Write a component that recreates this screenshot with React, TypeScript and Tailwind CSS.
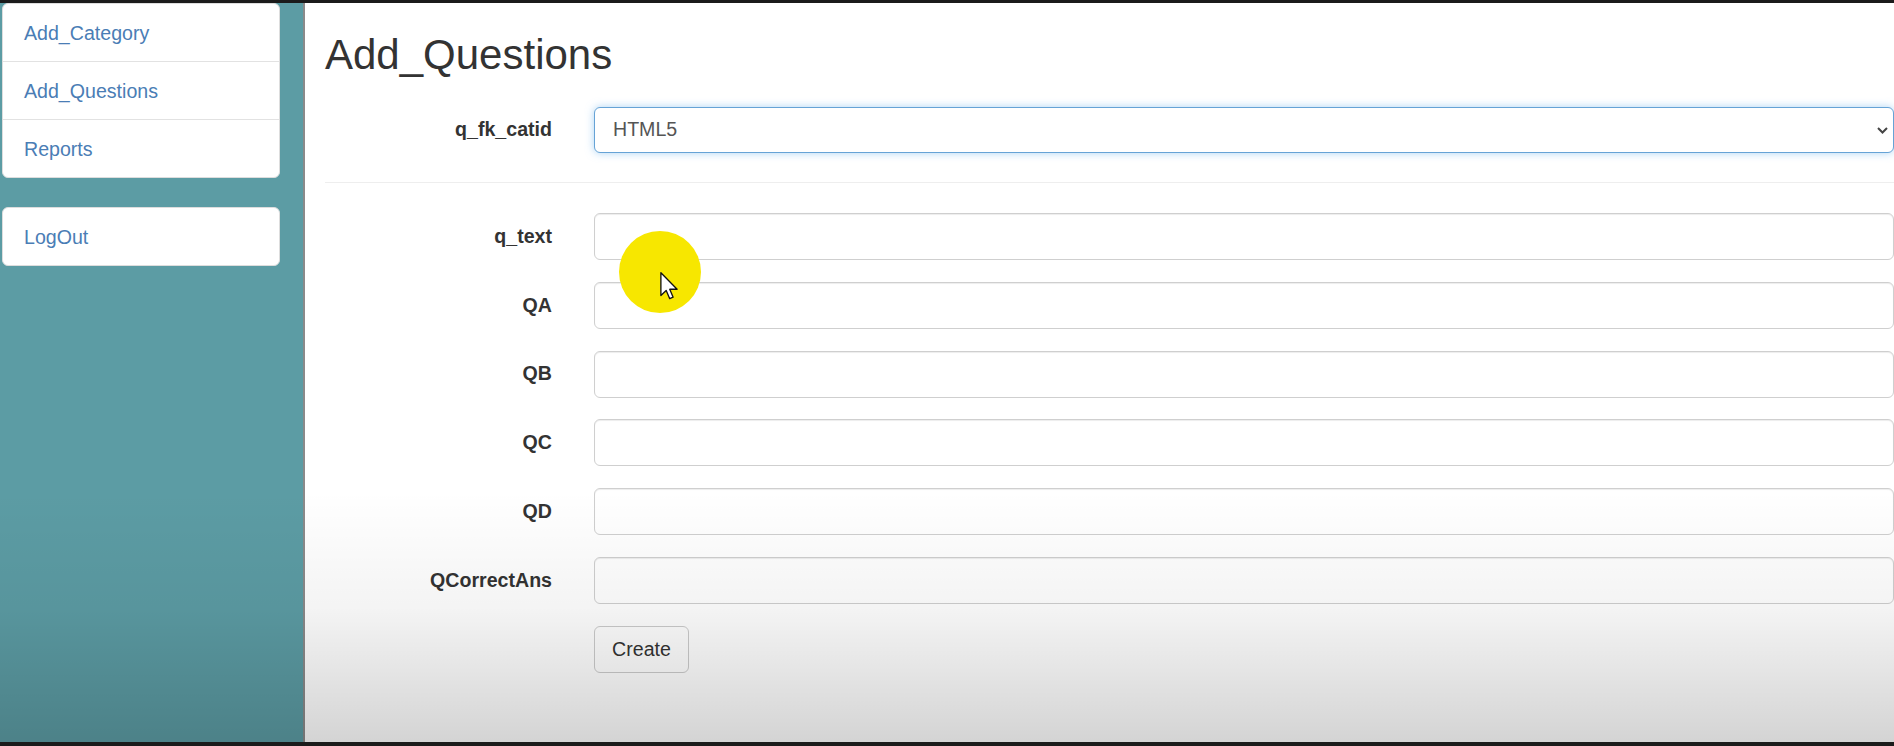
import React from 'react';

const navTop = ['Add_Category', 'Add_Questions', 'Reports'];

const fields = ['q_text', 'QA', 'QB', 'QC', 'QD', 'QCorrectAns'];

const FormRow: React.FC<{ label: string; children: React.ReactNode }> = ({ label, children }) => (
  <div className="flex items-center">
    <label className="w-[227px] shrink-0 text-right text-[19.6px] font-bold text-[#333]">{label}</label>
    <div className="ml-[42px] flex-1">{children}</div>
  </div>
);

export default function App() {
  return (
    <div className="h-[746px] w-[1894px] overflow-hidden bg-[#1b1b1b] pt-[3px] pb-[4px] font-['Liberation_Sans',Arial,sans-serif]">
      <div className="relative flex h-[739px]">
        {/* sidebar */}
        <aside className="w-[303px] shrink-0 bg-[#5c9ca4] pl-[2px] pr-[23px]">
          <div className="overflow-hidden rounded-[6px] border border-[#ddd] bg-white">
            {navTop.map((item, i) => (
              <div
                key={item}
                className={`px-[21px] py-[14.5px] text-[19.6px] leading-[28px] text-[#4a7db5] ${i > 0 ? 'border-t border-[#e2e2e2]' : ''}`}
              >
                {item}
              </div>
            ))}
          </div>
          <div className="mt-[29px] rounded-[6px] border border-[#ddd] bg-white px-[21px] py-[14.5px] text-[19.6px] leading-[28px] text-[#4a7db5]">
            LogOut
          </div>
        </aside>
        <div className="w-[2px] shrink-0 bg-[#8a8a8a]" />

        {/* main */}
        <main className="flex-1 overflow-hidden bg-white pl-[20px]">
          <h2 className="mt-[29px] text-[42px] leading-[46px] text-[#333]">Add_Questions</h2>

          <div className="mt-[29px]">
            <FormRow label="q_fk_catid">
              <div className="relative flex h-[46px] items-center rounded-[6px] border border-[#66a3d6] bg-white pl-[18px] text-[19.6px] text-[#555] shadow-[0_0_8px_rgba(102,175,233,0.55)]">
                HTML5
                <svg className="absolute right-[5px] top-[19px]" width="11" height="7" viewBox="0 0 11 7" fill="none">
                  <path d="M1 1l4.5 4.5L10 1" stroke="#444" strokeWidth="2" />
                </svg>
              </div>
            </FormRow>
          </div>

          <div className="mt-[29px] h-px bg-[#eeeeee]" />

          <div className="mt-[30px] flex flex-col gap-[21.8px]">
            {fields.map((f) => (
              <FormRow key={f} label={f}>
                <div className="h-[47px] rounded-[6px] border border-[#cfcfcf] bg-white shadow-[inset_0_1px_1px_rgba(0,0,0,0.075)]" />
              </FormRow>
            ))}
            <div className="flex">
              <div className="w-[227px] shrink-0" />
              <button className="ml-[42px] h-[47px] w-[95px] rounded-[6px] border border-[#cccccc] bg-white text-[19.6px] text-[#333]">
                Create
              </button>
            </div>
          </div>
        </main>

        {/* video vignette */}
        <div className="pointer-events-none absolute inset-0 bg-linear-to-b from-transparent from-[66%] via-black/[0.045] via-[82%] to-black/[0.17]" />

        {/* click highlight + cursor */}
        <div className="pointer-events-none absolute left-[619px] top-[228px] h-[82px] w-[82px] rounded-full bg-[#f7e700]" />
        <svg className="pointer-events-none absolute left-[660px] top-[269px]" width="18" height="28" viewBox="0 0 12 19">
          <path d="M0.5 0.5v15.5l3.6-3.5 2.4 5.6 2.3-1-2.3-5.4h5z" fill="white" stroke="#111" strokeWidth="0.9" strokeLinejoin="round" />
        </svg>
      </div>
    </div>
  );
}
